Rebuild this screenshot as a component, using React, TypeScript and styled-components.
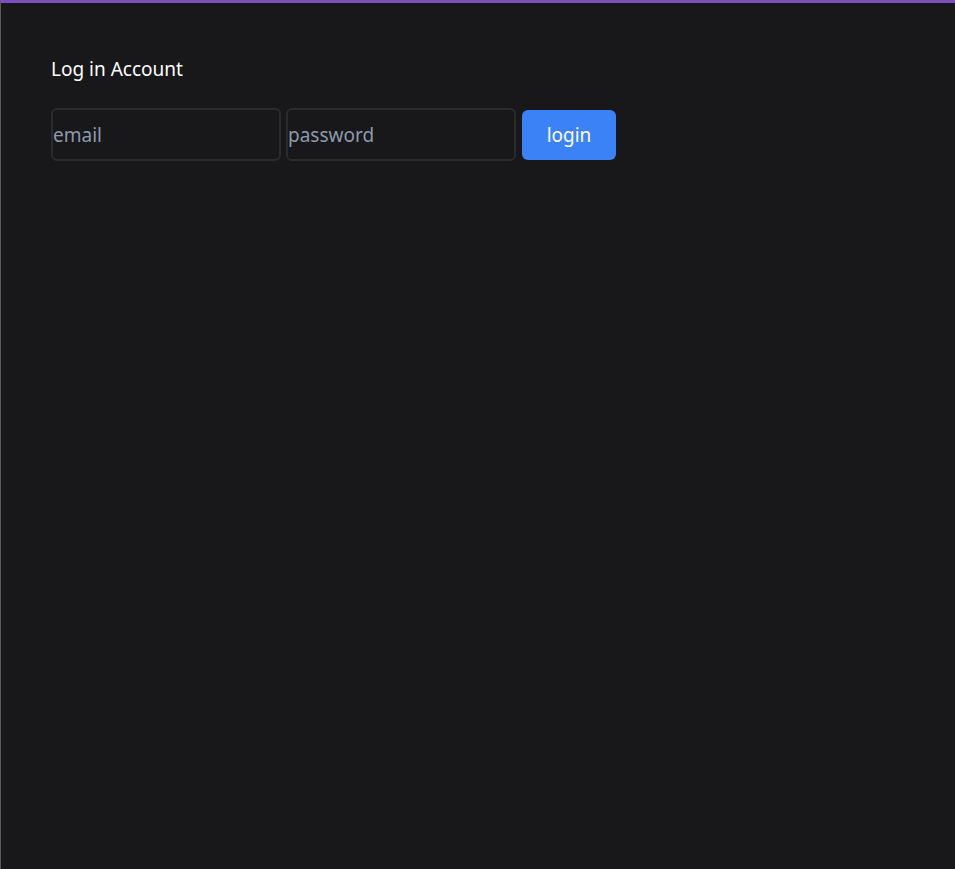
import styled, { createGlobalStyle } from "styled-components";

const GlobalStyle = createGlobalStyle`
  html, body {
    margin: 0;
    background: #18181b;
  }
  * {
    box-sizing: border-box;
  }
`;

const Page = styled.div`
  min-height: 100vh;
  background: #18181b;
  border-top: 3px solid #7b4fc0;
  border-left: 1px solid #5a5a5e;
  padding: 53px 50px;
  font-family: "Noto Sans", "Open Sans", sans-serif;
  color: #ffffff;
`;

const Title = styled.h1`
  margin: 0 0 26px;
  font-size: 19px;
  font-weight: 400;
  line-height: 26px;
`;

const Form = styled.form`
  display: flex;
  align-items: center;
  gap: 5px;
`;

const Field = styled.input`
  width: 230px;
  height: 53px;
  padding: 0;
  background: #18181b;
  border: 2px solid #2b2b2f;
  border-radius: 6px;
  color: #e4e4e7;
  font-family: inherit;
  font-size: 19px;
  outline: none;

  &::placeholder {
    color: #8d9aab;
  }
`;

const Button = styled.button`
  width: 94px;
  height: 50px;
  margin-left: 1px;
  background: #3b82f6;
  border: none;
  border-radius: 6px;
  color: #ffffff;
  font-family: inherit;
  font-size: 19px;
  cursor: pointer;
`;

const App = () => (
  <>
    <GlobalStyle />
    <Page>
      <Title>Log in Account</Title>
      <Form onSubmit={(e) => e.preventDefault()}>
        <Field type="email" placeholder="email" />
        <Field type="password" placeholder="password" />
        <Button type="submit">login</Button>
      </Form>
    </Page>
  </>
);

export default App;
